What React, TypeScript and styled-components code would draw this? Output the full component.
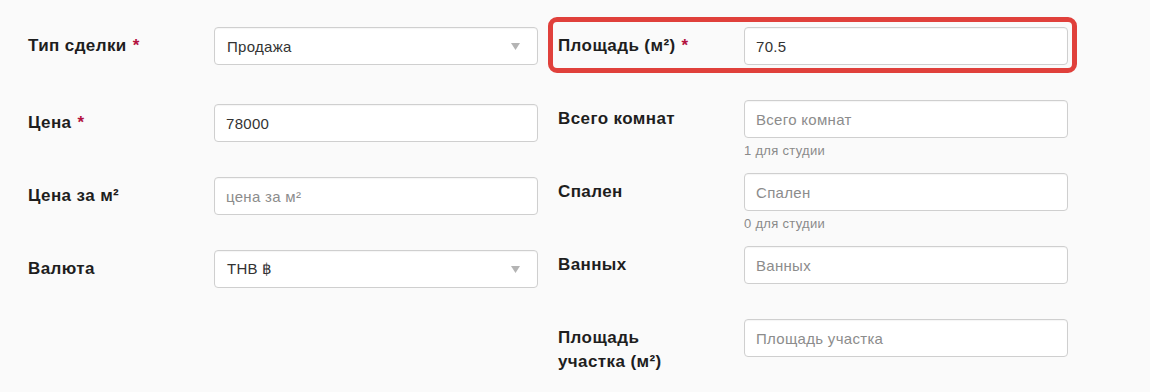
import styled, { createGlobalStyle } from "styled-components";

const GlobalStyle = createGlobalStyle`
  html, body {
    margin: 0;
    padding: 0;
    background: #fafafa;
  }
  body {
    font-family: "Liberation Sans", Arial, sans-serif;
    color: #222;
  }
`;

const Page = styled.div`
  display: flex;
  gap: 20px;
  padding: 27px 0 0 28px;
  width: 1150px;
  height: 392px;
  box-sizing: border-box;
  overflow: hidden;
`;

const Column = styled.div`
  display: flex;
  flex-direction: column;
  width: 510px;
`;

const Row = styled.div<{ $height?: number; $highlight?: boolean }>`
  position: relative;
  display: grid;
  grid-template-columns: 186px 324px;
  align-items: start;
  height: ${(p) => p.$height ?? 73}px;
  ${(p) =>
    p.$highlight &&
    `
    &::before {
      content: "";
      position: absolute;
      top: -10px;
      left: -10px;
      width: 529px;
      height: 56px;
      box-sizing: border-box;
      border: 5px solid #e0403b;
      border-radius: 9px;
      pointer-events: none;
    }
  `}
`;

const Label = styled.label`
  display: block;
  padding: 7px 45px 0 0;
  font-size: 17px;
  line-height: 24px;
  letter-spacing: 0.4px;
  font-weight: 700;
  color: #1e1e1e;
`;

const Required = styled.span`
  color: #b3123f;
  margin-left: 6px;
`;

const Field = styled.div`
  display: flex;
  flex-direction: column;
`;

const Input = styled.input`
  box-sizing: border-box;
  width: 100%;
  height: 38px;
  padding: 0 11px;
  border: 1px solid #cfcfcf;
  border-radius: 4px;
  background: #fff;
  box-shadow: inset 0 1px 1px rgba(0, 0, 0, 0.04);
  font-family: "Liberation Sans", Arial, sans-serif;
  font-size: 15px;
  letter-spacing: 0.3px;
  color: #333;
  outline: none;
  &::placeholder {
    color: #8c8c8c;
  }
`;

const SelectBox = styled.div`
  box-sizing: border-box;
  display: flex;
  align-items: center;
  justify-content: space-between;
  width: 100%;
  height: 38px;
  padding: 0 17px 0 12px;
  border: 1px solid #cfcfcf;
  border-radius: 4px;
  background: #fff;
  box-shadow: inset 0 1px 1px rgba(0, 0, 0, 0.04);
  font-size: 15px;
  letter-spacing: 0.3px;
  color: #333;
`;

const Arrow = styled.svg`
  width: 9px;
  height: 7px;
  fill: #b4b4b4;
`;

const Hint = styled.div`
  margin-top: 4px;
  font-size: 13px;
  line-height: 17px;
  letter-spacing: 0.3px;
  color: #8a8a8a;
`;

function Select({ value }: { value: string }) {
  return (
    <SelectBox>
      <span>{value}</span>
      <Arrow viewBox="0 0 9 7">
        <polygon points="0,0 9,0 4.5,7" />
      </Arrow>
    </SelectBox>
  );
}

export default function App() {
  return (
    <>
      <GlobalStyle />
      <Page>
        <Column>
          <Row $height={77}>
            <Label>
              Тип сделки<Required>*</Required>
            </Label>
            <Field>
              <Select value="Продажа" />
            </Field>
          </Row>
          <Row>
            <Label>
              Цена<Required>*</Required>
            </Label>
            <Field>
              <Input defaultValue="78000" />
            </Field>
          </Row>
          <Row>
            <Label>Цена за м²</Label>
            <Field>
              <Input placeholder="цена за м²" />
            </Field>
          </Row>
          <Row>
            <Label>Валюта</Label>
            <Field>
              <Select value="THB ฿" />
            </Field>
          </Row>
        </Column>
        <Column>
          <Row $highlight>
            <Label>
              Площадь (м²)<Required>*</Required>
            </Label>
            <Field>
              <Input defaultValue="70.5" />
            </Field>
          </Row>
          <Row>
            <Label>Всего комнат</Label>
            <Field>
              <Input placeholder="Всего комнат" />
              <Hint>1 для студии</Hint>
            </Field>
          </Row>
          <Row>
            <Label>Спален</Label>
            <Field>
              <Input placeholder="Спален" />
              <Hint>0 для студии</Hint>
            </Field>
          </Row>
          <Row>
            <Label>Ванных</Label>
            <Field>
              <Input placeholder="Ванных" />
            </Field>
          </Row>
          <Row>
            <Label>Площадь участка (м²)</Label>
            <Field>
              <Input placeholder="Площадь участка" />
            </Field>
          </Row>
        </Column>
      </Page>
    </>
  );
}
